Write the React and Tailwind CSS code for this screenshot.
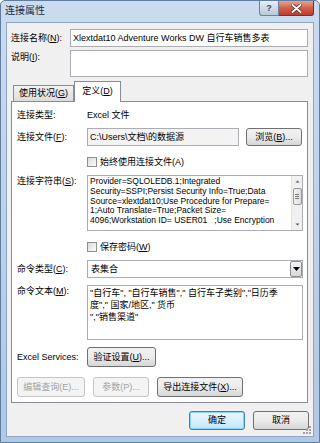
const font = { fontFamily: '"Liberation Sans", "Noto Sans CJK SC", sans-serif' };

const Btn = ({ className = '', disabled, children }) => (
  <div
    className={`flex items-center justify-center rounded-[3px] border text-[9px] leading-none ${
      disabled
        ? 'border-[#c4c4c4] bg-[#f4f4f4] text-[#a3a3a3]'
        : 'border-[#707070] bg-gradient-to-b from-[#f2f2f2] via-[#ebebeb] to-[#d6d6d6] text-black'
    } ${className}`}
  >
    {children}
  </div>
);

const Check = ({ children }) => (
  <div className="flex h-[12px] items-center gap-[3px]">
    <div className="h-[10px] w-[10px] border border-[#8f8f8f] bg-gradient-to-br from-[#dcdcdc] to-[#fbfbfb]" />
    <span className="text-[9px] leading-none">{children}</span>
  </div>
);

export default function App() {
  return (
    <div
      style={font}
      className="flex h-[443px] w-[320px] flex-col overflow-hidden rounded-t-[5px] border border-[#5f7d9f] bg-gradient-to-b from-[#cbdcf0] via-[#bcd1ea] to-[#b0c8e4] text-black"
    >
      {/* title bar */}
      <div className="flex h-[21px] shrink-0 items-start justify-between">
        <span className="ml-[4px] mt-[3px] text-[10px] leading-[14px] text-[#1e2d3c]">连接属性</span>
        <div className="mr-[5px] flex">
          <div className="flex h-[15px] w-[20px] items-center justify-center rounded-bl-[3px] border border-t-0 border-[#6d829c] bg-gradient-to-b from-[#e6edf6] via-[#cfdbea] to-[#b8c9dd] text-[9px] font-bold leading-none text-[#3b4b5e]">
            ?
          </div>
          <div className="flex h-[15px] w-[35px] items-center justify-center rounded-br-[3px] border border-l-0 border-t-0 border-[#7a2f2a] bg-gradient-to-b from-[#e8a493] via-[#d0604c] to-[#c0392b]">
            <svg width="11" height="9" viewBox="0 0 11 9">
              <path d="M1.5 1 L9.5 8 M9.5 1 L1.5 8" stroke="#5a1d17" strokeWidth="3.4" strokeLinecap="round" />
              <path d="M1.5 1 L9.5 8 M9.5 1 L1.5 8" stroke="#ffffff" strokeWidth="2" strokeLinecap="round" />
            </svg>
          </div>
        </div>
      </div>

      {/* client area */}
      <div className="relative mx-[5px] mb-[5px] flex flex-1 flex-col border border-[#8ea6c3] bg-[#f0f0f0]">
        <div className="mt-[6px] flex items-center">
          <span className="ml-[4px] w-[59px] text-[9px] leading-none">
            连接名称(<u>N</u>):
          </span>
          <div className="flex h-[18px] w-[238px] items-center border border-[#abadb3] bg-white pl-[2px] text-[9px] leading-none">
            Xlextdat10 Adventure Works DW 自行车销售多表
          </div>
        </div>
        <div className="mt-[3px] flex items-start">
          <span className="ml-[4px] mt-[1px] w-[59px] text-[9px] leading-[12px]">
            说明(<u>I</u>):
          </span>
          <div className="h-[27px] w-[238px] border border-[#abadb3] bg-white" />
        </div>

        {/* tabs */}
        <div className="mt-[4px] ml-[5px] flex items-end">
          <div className="ml-[1px] flex h-[16px] w-[61px] items-center justify-center border border-b-0 border-[#898c95] bg-gradient-to-b from-[#f2f2f2] to-[#dcdcdc] text-[9px] leading-none">
            使用状况(<u>G</u>)
          </div>
          <div className="relative z-10 -mb-px flex h-[21px] w-[47px] items-center justify-center border border-b-0 border-[#898c95] bg-white pb-[2px] text-[9px] leading-none">
            定义(<u>D</u>)
          </div>
        </div>
        <div className="ml-[4px] flex h-[302px] w-[297px] flex-col border border-[#898c95] bg-white pl-[5px] pt-[6px] text-[9px]">
          <div className="flex h-[14px] items-center">
            <span className="w-[70px] leading-none">连接类型:</span>
            <span className="leading-none">Excel 文件</span>
          </div>
          <div className="mt-[6px] flex items-center">
            <span className="w-[70px] leading-none">
              连接文件(<u>F</u>):
            </span>
            <div className="flex h-[18px] w-[152px] items-center border border-[#abadb3] bg-[#f3f3f3] pl-[2px] leading-none">
              C:\Users\文档\的数据源
            </div>
            <Btn className="ml-[7px] h-[18px] w-[56px]">
              浏览(<u>B</u>)...
            </Btn>
          </div>
          <div className="mt-[10px] ml-[70px]">
            <Check>始终使用连接文件(A)</Check>
          </div>
          <div className="mt-[7px] flex items-start">
            <span className="w-[70px] leading-[12px]">
              连接字符串(<u>S</u>):
            </span>
            <div className="flex h-[56px] w-[216px] border border-[#abadb3] bg-white">
              <div className="flex-1 whitespace-pre pl-[2px] pt-[1px] text-[8.5px] leading-[9.8px]">
                {'Provider=SQLOLEDB.1;Integrated\nSecurity=SSPI;Persist Security Info=True;Data\nSource=xlextdat10;Use Procedure for Prepare=\n1;Auto Translate=True;Packet Size=\n4096;Workstation ID= USER01   ;Use Encryption'}
              </div>
              <div className="flex w-[11px] flex-col items-center border-l border-[#e6e6e6] bg-[#f0f0f0]">
                <svg width="11" height="11" viewBox="0 0 11 11">
                  <path d="M3.5 6.5 L5.5 4.5 L7.5 6.5 Z" fill="#555" />
                </svg>
                <div className="mt-[1px] flex h-[17px] w-[9px] flex-col items-center justify-center gap-[1px] rounded-[2px] border border-[#9a9a9a] bg-gradient-to-r from-[#f4f4f4] to-[#dcdcdc]">
                  <div className="h-px w-[4px] bg-[#777]" />
                  <div className="h-px w-[4px] bg-[#777]" />
                  <div className="h-px w-[4px] bg-[#777]" />
                </div>
                <div className="flex-1" />
                <svg width="11" height="11" viewBox="0 0 11 11">
                  <path d="M3.5 4.5 L5.5 6.5 L7.5 4.5 Z" fill="#555" />
                </svg>
              </div>
            </div>
          </div>
          <div className="mt-[10px] ml-[70px]">
            <Check>
              保存密码(<u>W</u>)
            </Check>
          </div>
          <div className="mt-[7px] flex items-center">
            <span className="w-[70px] leading-none">
              命令类型(<u>C</u>):
            </span>
            <div className="flex h-[18px] w-[216px] items-center border border-[#abadb3] bg-white">
              <span className="flex-1 pl-[3px] leading-none">表集合</span>
              <div className="flex h-[16px] w-[12px] items-center justify-center rounded-[2px] border border-[#8e8f8f] bg-gradient-to-b from-[#f4f4f4] to-[#d8d8d8]">
                <svg width="7" height="4" viewBox="0 0 7 4">
                  <path d="M0 0 L7 0 L3.5 4 Z" fill="#000" />
                </svg>
              </div>
            </div>
          </div>
          <div className="mt-[7px] flex items-start">
            <span className="w-[70px] leading-[12px]">
              命令文本(<u>M</u>):
            </span>
            <div className="h-[55px] w-[216px] whitespace-pre border border-[#abadb3] bg-white pl-[2px] pt-[1px] leading-[12px]">
              {'"自行车", "自行车销售"," 自行车子类别","日历季\n度"," 国家/地区," 货币\n","销售渠道"'}
            </div>
          </div>
          <div className="mt-[7px] flex items-center">
            <span className="w-[70px] leading-none">Excel Services:</span>
            <Btn className="h-[20px] w-[69px]">
              验证设置(<u>U</u>)...
            </Btn>
          </div>
          <div className="mt-[10px] flex gap-[8px]">
            <Btn disabled className="h-[20px] w-[68px]">
              编辑查询(E)...
            </Btn>
            <Btn disabled className="h-[20px] w-[56px]">
              参数(P)...
            </Btn>
            <Btn className="h-[20px] w-[86px]">
              导出连接文件(<u>X</u>)...
            </Btn>
          </div>
        </div>

        {/* dialog buttons */}
        <div className="mt-[8px] mr-[4px] flex justify-end gap-[8px]">
          <div className="flex h-[19px] w-[56px] items-center justify-center rounded-[3px] border border-[#3c7fb1] bg-gradient-to-b from-[#eaf6fd] via-[#d9f0fc] to-[#bee6fd] text-[9px] leading-none shadow-[inset_0_0_0_1px_#8ed3f8]">
            确定
          </div>
          <Btn className="h-[19px] w-[56px]">取消</Btn>
        </div>

        <svg className="absolute bottom-[1px] right-[1px]" width="10" height="10" viewBox="0 0 10 10">
          <g fill="#a0a0a0">
            <rect x="7" y="1" width="2" height="2" />
            <rect x="4" y="4" width="2" height="2" />
            <rect x="7" y="4" width="2" height="2" />
            <rect x="1" y="7" width="2" height="2" />
            <rect x="4" y="7" width="2" height="2" />
            <rect x="7" y="7" width="2" height="2" />
          </g>
        </svg>
      </div>
    </div>
  );
}
